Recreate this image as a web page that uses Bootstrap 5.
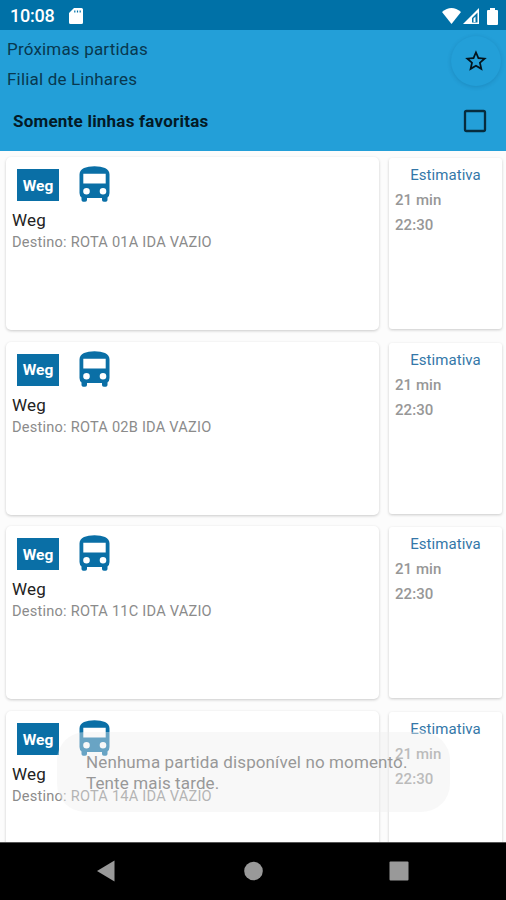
<!DOCTYPE html>
<html lang="pt-BR">
<head>
<meta charset="utf-8">
<meta name="viewport" content="width=device-width, initial-scale=1">
<title>Próximas partidas</title>
<link href="https://cdn.jsdelivr.net/npm/bootstrap@5.3.0/dist/css/bootstrap.min.css" rel="stylesheet">
<style>
  body { font-family: Roboto, "Liberation Sans", sans-serif; background: #fcfcfc; width: 506px; height: 900px; line-height: 1; }
  svg { display: block; flex: none; }
  .statusbar { height: 30px; background: #0071a7; padding: 2px 8px 0 10px; }
  .clock { font-size: 18px; font-weight: 500; letter-spacing: -.25px; }
  .sdcard { margin-left: 15px; }
  .signal { margin-left: 2px; }
  .battery { margin-left: 8px; }
  .appbar { height: 121px; background: #239fd8; color: #08384f; }
  .head-line { font-size: 17px; line-height: 30px; letter-spacing: .18px; padding-left: 7px; padding-top: 4px; }
  .fab { width: 50px; height: 50px; margin: 6px 5px 0 0; box-shadow: 0 1px 4px rgba(0,50,90,.18); background: #239fd8; }
  .filter { height: 54px; padding: 0 19px 0 13px; }
  .filter-text { font-size: 17px; font-weight: 700; letter-spacing: .22px; color: #031a26; }
  .departures { height: 691px; padding: 6px 4px 0 6px; }
  .departure { height: 173px; margin-bottom: 11.7px; gap: 10px; }
  .tile { border: 0; border-radius: 5px; background: #fff; box-shadow: 0 1px 3px rgba(0,0,0,.2); color: #222; }
  .tile-line { width: 373px; padding: 9px 6px 0; }
  .tile-time { width: 113px; height: 171px; margin-top: 1px; padding: 9px 6px 0; border-radius: 3px; }
  .logo { width: 42px; height: 32px; margin: 3px 0 0 5px; padding-top: 3px; background: #0a6fa6; font-size: 15.500px; font-weight: 700; }
  .bus { margin-left: 20px; }
  .operator { font-size: 17px; line-height: 22px; margin-top: 7px; letter-spacing: .15px; }
  .dest { font-size: 14.6px; line-height: 22px; color: #8b8b8b; letter-spacing: .22px; }
  .estimate { font-size: 15px; line-height: 17px; color: #3477a8; letter-spacing: .05px; padding-left: 0; margin-bottom: 4px; }
  .eta { font-size: 15px; line-height: 25px; color: #979797; font-weight: 500; letter-spacing: .05px; }
  .notice { left: 57px; top: 732px; width: 393px; height: 80px; border-radius: 28px; background: rgba(238,238,238,.42); color: #989898; padding: 20px 0 0 29px; font-size: 17px; line-height: 20.500px; letter-spacing: .12px; }
  .navkeys { height: 58px; background: #000; border-top: 1px solid #555; }
</style>
</head>
<body class="position-relative overflow-hidden d-flex flex-column m-0">
<svg width="0" height="0" class="position-absolute" aria-hidden="true">
  <symbol id="bus" viewBox="0 0 31 36">
    <path fill="#0a6fa6" fill-rule="evenodd" d="M5 2Q9 .2 15.500 .2T26 2Q30.500 4 30.500 8.500V27Q30.500 30 28.500 31.500V34q0 1.700-1.700 1.700h-2q-1.800 0-1.800-1.700v-2H8v2q0 1.700-1.800 1.700h-2Q2.500 35.700 2.500 34v-2.500Q.5 30 .5 27V8.500Q.5 4 5 2ZM4.300 7.800V17.500H26.700V7.800ZM7.500 22a3.300 3.300 0 1 0 0 6.600a3.300 3.300 0 0 0 0-6.600ZM24 22a3.300 3.300 0 1 0 0 6.600a3.300 3.300 0 0 0 0-6.600Z"/>
  </symbol>
</svg>

<div class="statusbar d-flex align-items-center text-white">
  <span class="clock">10:08</span>
  <svg class="sdcard" width="14" height="16" viewBox="0 0 14 16"><path fill="#fff" fill-rule="evenodd" d="M5 0h7.500Q14 0 14 1.500v13q0 1.500-1.500 1.500h-11Q0 16 0 14.500V5ZM5.200 2.500V4.500h1.200V2.500ZM7.900 2.500V4.500h1.200V2.500ZM10.600 2.500V4.500h1.200V2.500Z"/></svg>
  <svg class="ms-auto" width="19" height="16" viewBox="0 0 19 16"><path fill="#fff" d="M0 4Q9.500-4 19 4L9.500 16Z"/></svg>
  <svg class="signal" width="16" height="16" viewBox="0 0 16 16"><path fill="#fff" fill-rule="evenodd" d="M16 0v16H0ZM14.500 4.500 9 10V14.500H14.500ZM10.500 10.500 12.500 8.500V14H10.500Z"/></svg>
  <svg class="battery" width="11" height="17" viewBox="0 0 11 17"><path fill="#fff" d="M3 0h5v2h2q1 0 1 1v13q0 1-1 1H1q-1 0-1-1V3q0-1 1-1h2Z"/></svg>
</div>

<header class="appbar">
  <div class="d-flex justify-content-between">
    <div class="head-line"><div>Próximas partidas</div><div>Filial de Linhares</div></div>
    <div class="fab rounded-circle d-flex align-items-center justify-content-center">
      <svg width="24" height="24" viewBox="0 0 24 24"><path fill="#03131c" d="m22 9.240-7.190-.62L12 2 9.190 8.630 2 9.240l5.460 4.730L5.820 21 12 17.270 18.180 21l-1.630-7.030L22 9.240zM12 15.400l-3.760 2.270 1-4.280-3.320-2.880 4.380-.38L12 6.100l1.710 4.040 4.380.38-3.320 2.880 1 4.280L12 15.400z" transform="translate(-1 -1) scale(1.080)"/></svg>
    </div>
  </div>
  <div class="filter d-flex align-items-center justify-content-between">
    <span class="filter-text">Somente linhas favoritas</span>
    <svg width="24" height="24" viewBox="0 0 24 24"><rect x="2" y="2" width="20" height="20" rx="1.500" fill="none" stroke="#072c3d" stroke-width="2.300"/></svg>
  </div>
</header>

<main class="departures overflow-hidden">
  <div class="departure d-flex">
    <section class="tile tile-line">
      <div class="d-flex"><div class="logo text-white d-flex align-items-center justify-content-center">Weg</div><svg class="bus" width="31" height="36"><use href="#bus"/></svg></div>
      <div class="operator">Weg</div><div class="dest">Destino: ROTA 01A IDA VAZIO</div>
    </section>
    <section class="tile tile-time"><div class="estimate text-center">Estimativa</div><div class="eta">21 min</div><div class="eta">22:30</div></section>
  </div>
  <div class="departure d-flex">
    <section class="tile tile-line">
      <div class="d-flex"><div class="logo text-white d-flex align-items-center justify-content-center">Weg</div><svg class="bus" width="31" height="36"><use href="#bus"/></svg></div>
      <div class="operator">Weg</div><div class="dest">Destino: ROTA 02B IDA VAZIO</div>
    </section>
    <section class="tile tile-time"><div class="estimate text-center">Estimativa</div><div class="eta">21 min</div><div class="eta">22:30</div></section>
  </div>
  <div class="departure d-flex">
    <section class="tile tile-line">
      <div class="d-flex"><div class="logo text-white d-flex align-items-center justify-content-center">Weg</div><svg class="bus" width="31" height="36"><use href="#bus"/></svg></div>
      <div class="operator">Weg</div><div class="dest">Destino: ROTA 11C IDA VAZIO</div>
    </section>
    <section class="tile tile-time"><div class="estimate text-center">Estimativa</div><div class="eta">21 min</div><div class="eta">22:30</div></section>
  </div>
  <div class="departure d-flex">
    <section class="tile tile-line">
      <div class="d-flex"><div class="logo text-white d-flex align-items-center justify-content-center">Weg</div><svg class="bus" width="31" height="36"><use href="#bus"/></svg></div>
      <div class="operator">Weg</div><div class="dest">Destino: ROTA 14A IDA VAZIO</div>
    </section>
    <section class="tile tile-time"><div class="estimate text-center">Estimativa</div><div class="eta">21 min</div><div class="eta">22:30</div></section>
  </div>
</main>

<div class="notice position-absolute" role="status">Nenhuma partida disponível no momento.<br>Tente mais tarde.</div>

<nav class="navkeys">
  <svg width="506" height="57" viewBox="0 0 506 57" fill="#999"><path d="M97 28 114.500 17.500V38.500Z"/><circle cx="253.500" cy="28" r="9.300"/><rect x="389.500" y="18.500" width="19" height="19" rx="1"/></svg>
</nav>
<script src="https://cdn.jsdelivr.net/npm/bootstrap@5.3.0/dist/js/bootstrap.bundle.min.js"></script>
</body>
</html>
